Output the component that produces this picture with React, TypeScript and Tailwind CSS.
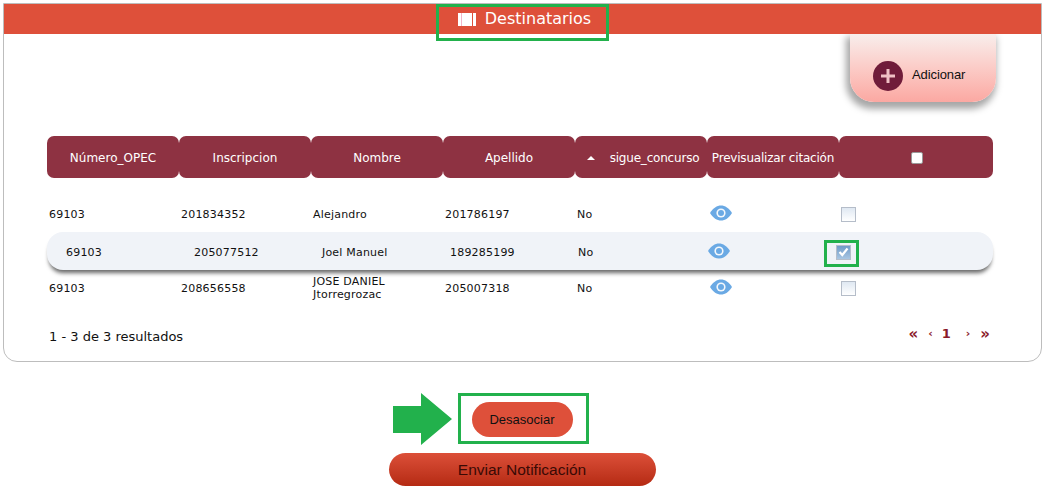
import React from "react";

const verdana = "font-['DejaVu_Sans',sans-serif]";
const arial = "font-['Liberation_Sans',Arial,sans-serif]";

const headers = ["Número_OPEC", "Inscripcion", "Nombre", "Apellido", "sigue_concurso", "Previsualizar citación"];

const Eye = () => (
  <svg width="22" height="16" viewBox="0 0 22 16">
    <path d="M0 8C3 3 7 .5 11 .5S19 3 22 8c-3 5-7 7.5-11 7.5S3 13 0 8z" fill="#6aa9e4" />
    <circle cx="11" cy="8" r="4.6" fill="#f4f8fc" />
    <circle cx="11" cy="8" r="3" fill="#6aa9e4" />
  </svg>
);

const Check = ({ checked = false }: { checked?: boolean }) => (
  <div
    className={
      "w-[15px] h-[15px] border border-[#b5bdc9] flex items-center justify-center " +
      (checked ? "bg-gradient-to-b from-[#6f9bc8] to-[#a9c6e2]" : "bg-gradient-to-b from-[#dfe8f2] to-[#ffffff]")
    }
  >
    {checked && (
      <svg width="11" height="10" viewBox="0 0 11 10">
        <path d="M1.5 5l2.8 3L9.5 1.5" fill="none" stroke="#fff" strokeWidth="2.2" />
      </svg>
    )}
  </div>
);

const cell = `${verdana} text-[11px] leading-[13px] text-[#111] tracking-[0.2px]`;

const App = () => {
  return (
    <div className={`w-[1048px] h-[500px] bg-white pt-[3px] pl-[3px] overflow-hidden ${arial}`}>
      <div className="w-[1039px] h-[359px] border border-[#bdbdbd] rounded-b-[14px]">
        {/* barra de titulo */}
        <div className="h-[30px] bg-[#de503a] flex justify-center relative">
          <div className="absolute left-[432px] top-0 w-[173px] h-[37px] border-[3px] border-[#22b14c]" />
          <div className={`flex items-center gap-[9px] ml-[4px] ${verdana} text-white text-[16px]`}>
            <div className="w-[18px] h-[13px] bg-white flex pl-[3px]">
              <div className="w-[1px] h-full bg-[#f3b5c9]" />
              <div className="w-[10px]" />
              <div className="w-[1px] h-full bg-[#de503a]" />
            </div>
            <span>Destinatarios</span>
          </div>
        </div>

        {/* adicionar */}
        <div className="ml-[846px] w-[146px] h-[68px] rounded-b-[24px] bg-gradient-to-b from-[#f8eeec] to-[#fba8a2] shadow-[-2px_5px_7px_2px_rgba(0,0,0,0.35)] flex items-end pl-[23px] pb-[11px] gap-[8px]">
          <div className="w-[30px] h-[30px] rounded-full bg-[#701c3a] flex items-center justify-center">
            <svg width="18" height="18" viewBox="0 0 18 18">
              <path d="M9 2v14M2 9h14" stroke="#f0c0c4" strokeWidth="3" />
            </svg>
          </div>
          <span className="text-[13px] text-[#111] leading-[28px] mb-[2px] ml-[1px] tracking-[-0.1px]">Adicionar</span>
        </div>

        {/* tabla */}
        <div className="ml-[43px] w-[946px] mt-[34px]">
          <div className="grid grid-cols-[132px_132px_132px_132px_132px_132px_154px] h-[42px]">
            {headers.map((h, i) => (
              <div
                key={h}
                className={`bg-[#8e3242] rounded-[7px] flex items-center justify-center text-white text-[12px] pt-[2px] ${verdana} ${i === 4 ? "gap-[15px] pl-[4px] tracking-[-0.2px]" : ""} ${i === 5 ? "tracking-[-0.2px]" : ""}`}
              >
                {i === 4 && (
                  <svg width="8" height="4" viewBox="0 0 8 4">
                    <path d="M0 4L4 0l4 4z" fill="#fff" />
                  </svg>
                )}
                {h}
              </div>
            ))}
            <div className="bg-[#8e3242] rounded-[7px] flex items-center justify-center">
              <div className="w-[12px] h-[12px] bg-white rounded-[2px] border border-[#999] ml-[2px] mt-[1px]" />
            </div>
          </div>

          <div className="mt-[17px] h-[37px] pt-[2px] grid grid-cols-[132px_132px_132px_132px_132px_132px_154px] items-center pl-[2px]">
            <span className={cell}>69103</span>
            <span className={cell}>201834352</span>
            <span className={cell}>Alejandro</span>
            <span className={cell}>201786197</span>
            <span className={cell}>No</span>
            <div className="pl-[1px] mb-[3px]"><Eye /></div>
            <div><Check /></div>
          </div>

          <div className="h-[38px] pt-[2px] rounded-[16px] bg-[#f0f3f8] shadow-[0px_5px_4px_-2px_rgba(0,0,0,0.6)] flex items-center relative">
            <span className={`${cell} ml-[19px] w-[128px]`}>69103</span>
            <span className={`${cell} w-[128px]`}>205077512</span>
            <span className={`${cell} w-[128px]`}>Joel Manuel</span>
            <span className={`${cell} w-[128px]`}>189285199</span>
            <span className={`${cell} w-[130px]`}>No</span>
            <div className="w-[128px] mb-[2px]"><Eye /></div>
            <Check checked />
            <div className="absolute left-[777px] top-[8px] w-[35px] h-[27px] border-[3px] border-[#22b14c]" />
          </div>

          <div className="h-[36px] grid grid-cols-[132px_132px_132px_132px_132px_132px_154px] items-center pl-[2px]">
            <span className={cell}>69103</span>
            <span className={cell}>208656558</span>
            <span className={cell}>JOSE DANIEL<br />Jtorregrozac</span>
            <span className={cell}>205007318</span>
            <span className={cell}>No</span>
            <div className="pl-[1px] mb-[3px]"><Eye /></div>
            <div><Check /></div>
          </div>

          <div className="flex justify-between items-center mt-[20px] pl-[2px]">
            <span className={`${verdana} text-[13px] text-[#111] leading-[16px]`}>1 - 3 de 3 resultados</span>
            <div className={`${verdana} text-[#8b1a2a] font-bold flex items-center gap-[10px] pr-[3px] mb-[5px] text-[11px] leading-[16px]`}>
              <span className="text-[15px] leading-[16px]">«</span>
              <span>‹</span>
              <span className="text-[13px] ml-[-1px]">1</span>
              <span className="ml-[5px]">›</span>
              <span className="text-[15px] leading-[16px]">»</span>
            </div>
          </div>
        </div>
      </div>

      {/* acciones */}
      <div className="flex flex-col items-center w-[1039px]">
        <div className="relative ml-[1px] mt-[31px] w-[131px] h-[51px] border-[3px] border-[#22b14c] flex items-center justify-center">
          <svg className="absolute left-[-68px] top-[-3px]" width="59" height="52" viewBox="0 0 59 52">
            <path d="M0 13h28V0l31 26L28 52V40H0z" fill="#22b14c" />
          </svg>
          <button className="w-[101px] h-[35px] mt-[2px] ml-[-2px] rounded-full bg-[#de503a] text-[13px] text-[#111]">Desasociar</button>
        </div>
        <button className="mt-[9px] ml-[-1px] w-[267px] h-[33px] rounded-full bg-gradient-to-b from-[#dc4f38] to-[#b52a12] text-[15.5px] text-[#3a0a05]">
          Enviar Notificación
        </button>
      </div>
    </div>
  );
};

export default App;
